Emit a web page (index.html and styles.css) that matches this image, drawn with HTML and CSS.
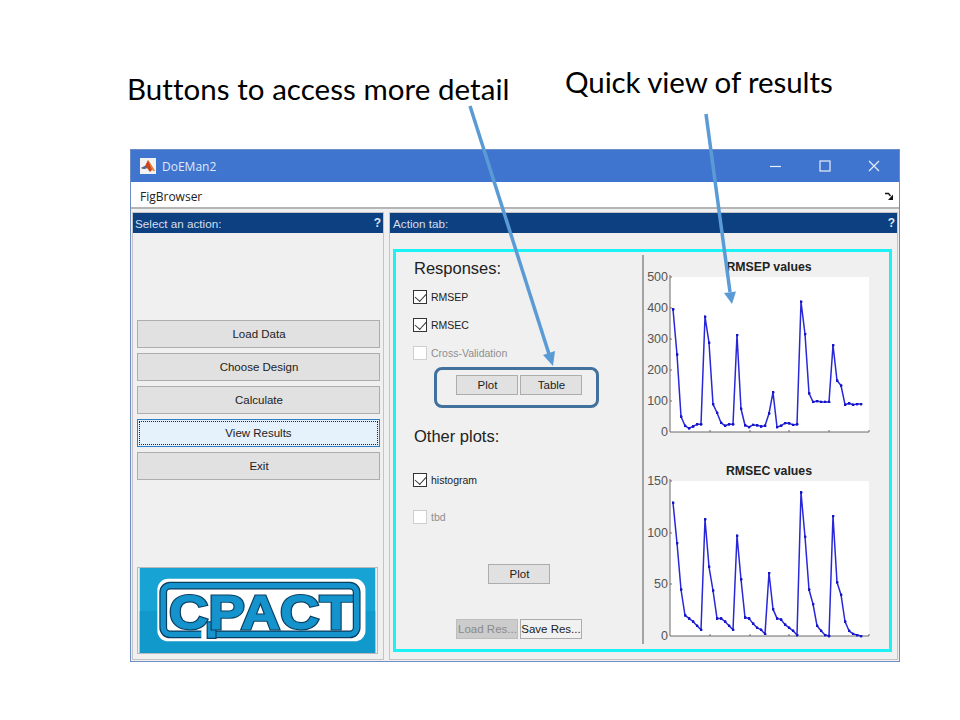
FILE: index.html
```html
<!DOCTYPE html>
<html lang="en">
<head>
<meta charset="utf-8">
<title>DoEMan2</title>
<link rel="stylesheet" href="styles.css">
</head>
<body>
<div class="slide">
  <div class="note note-detail">Buttons to access more detail</div>
  <div class="note note-quick">Quick view of results</div>

  <div class="window">
    <div class="titlebar">
      <svg class="app-icon" viewBox="0 0 16 16" aria-hidden="true">
        <rect width="16" height="16" fill="#f2f2f2"/>
        <path d="M1 10l4-2 3-6 2 3 5 8-3-1-2 2-3-4-3 1z" fill="#c9451d"/>
        <path d="M1 10l4-2 2 2-3 1z" fill="#3d6fa8"/>
        <path d="M8 2l2 3 5 8-3-1z" fill="#e9892b"/>
      </svg>
      <span class="app-name">DoEMan2</span>
      <div class="win-controls">
        <svg viewBox="0 0 12 12" aria-hidden="true"><path d="M0 6.500h11" /></svg>
        <svg viewBox="0 0 12 12" aria-hidden="true"><rect x="1" y="1" width="10" height="10"/></svg>
        <svg viewBox="0 0 12 12" aria-hidden="true"><path d="M1 1l10 10M11 1L1 11"/></svg>
      </div>
    </div>
    <div class="menubar">
      <span>FigBrowser</span>
      <svg class="dock-icon" viewBox="0 0 8 8" aria-hidden="true"><path d="M0 1.500h3.500l2 2.500" fill="none" stroke="#111" stroke-width="1.300"/><path d="M8 2.500V8H3z" fill="#111"/></svg>
    </div>

    <div class="panels">
      <section class="panel panel-left">
        <header class="panel-head"><span>Select an action:</span><b>?</b></header>
        <div class="actions">
          <button class="btn action">Load Data</button>
          <button class="btn action">Choose Design</button>
          <button class="btn action">Calculate</button>
          <button class="btn action selected"><span>View Results</span></button>
          <button class="btn action">Exit</button>
        </div>
        <svg class="logo" viewBox="0 0 241 87" aria-label="CPACT logo">
          <rect width="241" height="87" fill="#17a3d3"/>
          <rect x="0" y="44" width="241" height="43" fill="#1199cb"/>
          <rect x="18" y="11" width="213" height="64" rx="11" fill="#fff"/>
          <rect class="ring-dark" x="24" y="18" width="198" height="50" rx="7"/>
          <rect class="ring-blue" x="24" y="18" width="198" height="50" rx="7"/>
          <path class="stem-gap" d="M63 63h6v10h-6z"/>
          <path class="stem" d="M69 55h9v17h-9z"/>
          <text class="logo-under" aria-hidden="true" x="124" y="62" textLength="188" lengthAdjust="spacingAndGlyphs" text-anchor="middle">CPACT</text>
          <text class="logo-over" x="124" y="62" textLength="188" lengthAdjust="spacingAndGlyphs" text-anchor="middle">CPACT</text>
        </svg>
      </section>

      <section class="panel panel-right">
        <header class="panel-head"><span>Action tab:</span><b>?</b></header>
        <div class="frame">
          <div class="controls">
            <h2 class="group-title first">Responses:</h2>
            <label class="check first-check"><i class="box on"></i>RMSEP</label>
            <label class="check gap-28"><i class="box on"></i>RMSEC</label>
            <label class="check gap-28 disabled"><i class="box"></i>Cross-Validation</label>
            <div class="btn-row row-a"><button class="btn small">Plot</button><button class="btn small">Table</button></div>
            <h2 class="group-title second">Other plots:</h2>
            <label class="check hist-check"><i class="box on"></i>histogram</label>
            <label class="check tbd-check disabled"><i class="box"></i>tbd</label>
            <div class="btn-row row-b"><button class="btn small">Plot</button></div>
            <div class="btn-row row-c"><button class="btn small off">Load Res...</button><button class="btn small save">Save Res...</button></div>
          </div>
          <div class="charts">
            <svg class="chart chart-top" viewBox="0 0 232 180" aria-label="RMSEP values">
              <defs>
                <marker id="dot" viewBox="0 0 4 4" refX="2" refY="2" markerWidth="3" markerHeight="3" markerUnits="userSpaceOnUse"><circle cx="2" cy="2" r="2" fill="#1616c8"/></marker>
              </defs>
              <text class="chart-title" x="124" y="13" text-anchor="middle">RMSEP values</text>
              <rect x="25" y="19" width="199" height="155" fill="#fff"/>
              <g class="axis"><path d="M25 17V174H224M65 174v-2M105 174v-2M144 174v-2M184 174v-2M224 174v-2M25 143h2M25 112h2M25 81h2M25 50h2M25 19h2"/></g>
              <g class="ticks" text-anchor="end">
                <text x="23" y="178">0</text><text x="23" y="147">100</text><text x="23" y="116">200</text><text x="23" y="85">300</text><text x="23" y="54">400</text><text x="23" y="23">500</text>
              </g>
              <g transform="translate(25 19)">
                <polyline class="series" points="3,32.2 7,77.5 11,139.5 15,148.8 19,151.3 23,149.4 27,147.3 31,147.3 35,39.7 39,65.7 43,127.1 47,135.8 51,145.7 55,148.8 59,147.3 63,147.3 67,58 71,131.8 75,148.2 79,150 83,147.9 87,148.2 91,149.4 95,148.8 99,136.4 103,115.3 107,150 111,148.8 115,146 119,146.3 123,147.9 127,147.3 131,24.8 135,57 139,116.3 143,124.9 147,124 151,124.9 155,124.9 159,124.9 163,68.2 167,103.5 171,108.5 175,127.7 179,126.2 183,127.7 187,127.1 191,127.1"/>
              </g>
            </svg>
            <svg class="chart chart-bottom" viewBox="0 0 232 180" aria-label="RMSEC values">
              <text class="chart-title" x="124" y="13" text-anchor="middle">RMSEC values</text>
              <rect x="25" y="19" width="199" height="155" fill="#fff"/>
              <g class="axis"><path d="M25 17V174H224M65 174v-2M105 174v-2M144 174v-2M184 174v-2M224 174v-2M25 122h2M25 71h2M25 19h2"/></g>
              <g class="ticks" text-anchor="end">
                <text x="23" y="178">0</text><text x="23" y="126">50</text><text x="23" y="75">100</text><text x="23" y="23">150</text>
              </g>
              <g transform="translate(25 19)">
                <polyline class="series" points="3,21.7 7,62 11,108.5 15,134.3 19,137.4 23,140.5 27,144.7 31,148.8 35,38.2 39,85.8 43,109.5 47,137.4 51,137.4 55,140.5 59,144.7 63,148.8 67,54.8 71,98.2 75,136.4 79,137.4 83,142.6 87,146.7 91,148.8 95,152.9 99,92 103,128.1 107,137.4 111,138.5 115,143.6 119,146.7 123,149.8 127,154 131,11.4 135,55.8 139,108.5 143,123 147,144.7 151,149.8 155,154 159,155 163,35.1 167,101.3 171,113.7 175,140.5 179,149.8 183,152.9 187,154 191,155"/>
              </g>
            </svg>
          </div>
        </div>
      </section>
    </div>
  </div>

  <div class="callout"></div>
  <svg class="arrows" viewBox="0 0 960 720" aria-hidden="true">
    <path class="arrow-line" d="M470 106L549 354"/>
    <path class="arrow-head" d="M543 355l12 -4 L553 366z"/>
    <path class="arrow-line" d="M706 114L730 292"/>
    <path class="arrow-head" d="M724 293l12 -1.500 L732 304z"/>
  </svg>
</div>
</body>
</html>
```
FILE: styles.css
```css
* { box-sizing: border-box; }
html, body { margin: 0; padding: 0; background: #fff; }
body { font-family: "Liberation Sans", Arial, sans-serif; }

.slide { position: relative; width: 960px; height: 720px; overflow: hidden; background: #fff; }

.note { position: absolute; font-family: Lato, "Open Sans", sans-serif; color: #000; white-space: nowrap; line-height: 34px; font-size: 29.5px; }
.note-detail { left: 127px; top: 72px; letter-spacing: 0.05px; }
.note-quick { left: 565px; top: 65px; letter-spacing: -0.1px; }

.window { position: absolute; left: 130px; top: 149px; width: 770px; height: 513px; border: 1px solid #6d8cc4; background: #f0f0f0; display: flex; flex-direction: column; }

.titlebar { height: 32px; flex: none; background: #3f75cf; display: flex; align-items: center; padding-left: 9px; }
.app-icon { width: 16px; height: 16px; display: block; }
.app-name { margin-left: 6px; font-family: "Open Sans", sans-serif; font-size: 12px; color: #dfe8f7; }
.win-controls { margin-left: auto; display: flex; gap: 37px; margin-right: 19px; }
.win-controls svg { width: 12px; height: 12px; display: block; fill: none; stroke: #e8eef9; stroke-width: 1.2; }

.menubar { height: 27px; flex: none; background: #fff; border-bottom: 2px solid #b5b5b5; display: flex; align-items: center; justify-content: space-between; padding: 3px 6px 0 9px; font-family: "Open Sans", sans-serif; font-size: 12px; color: #222; }
.dock-icon { width: 8px; height: 8px; display: block; }

.panels { flex: 1; display: flex; gap: 5px; padding: 3px 1px 1px 1px; min-height: 0; }
.panel { border: 1px solid #c4c4c4; background: #f0f0f0; display: flex; flex-direction: column; }
.panel-left { width: 252px; }
.panel-right { flex: 1; min-width: 0; }

.panel-head { height: 20px; flex: none; background: #0d4080; color: #d7dfec; display: flex; align-items: center; justify-content: space-between; padding: 0 2px; font-size: 11.7px; }
.panel-right .panel-head { padding-left: 3px; }
.panel-head b { font-size: 12px; color: #dfe6f2; }

.actions { margin: 87px 0 0 4px; display: flex; flex-direction: column; gap: 5px; }
.btn { font-family: "Liberation Sans", Arial, sans-serif; color: #222; background: #e1e1e1; border: 1px solid #adadad; padding: 0 0 0 1px; margin: 0; display: block; white-space: nowrap; }
.action { width: 243px; height: 28px; font-size: 11.5px; }
.selected { background: #e5f1fb; border: 1px solid #2f7fc4; padding: 1px; }
.selected span { display: flex; align-items: center; justify-content: center; height: 100%; border: 1px dotted #222; }

.logo { display: block; width: 241px; height: 87px; margin: auto 0 5px 4px; border: 1px solid #b9b9b9; }
.ring-dark { fill: none; stroke: #0b3f60; stroke-width: 8; }
.ring-blue { fill: none; stroke: #1493cc; stroke-width: 5.5; }
.stem-gap { fill: #fff; }
.stem { fill: #1493cc; stroke: #0b3f60; stroke-width: 1.2; }
.logo-under, .logo-over { font-family: "Liberation Sans", Arial, sans-serif; font-weight: 700; font-size: 50px; }
.logo-under { fill: #0b3f60; stroke: #0b3f60; stroke-width: 3; stroke-linejoin: miter; }
.logo-over { fill: #1493cc; stroke: #1493cc; stroke-width: 0.8; }

.frame { margin: 16px 0 0 3px; width: 499px; height: 403px; border: 3px solid #1cf2f5; display: flex; }
.controls { width: 246px; flex: none; }
.group-title { margin: 0 0 0 18px; font-size: 16.5px; font-weight: 400; line-height: 20px; color: #222; }
.group-title.first { margin-top: 6px; }
.group-title.second { margin-top: 31px; }

.check { display: flex; align-items: center; height: 14px; margin-left: 17px; font-size: 10.5px; color: #222; }
.first-check { margin-top: 12px; }
.gap-28 { margin-top: 14px; }
.hist-check { margin-top: 27px; }
.tbd-check { margin-top: 23px; }
.check.disabled { color: #8e8e8e; }
.box { position: relative; width: 14px; height: 14px; flex: none; margin-right: 4px; border: 1px solid #333; background: #fff; }
.disabled .box { border-color: #cfcfcf; }
.box.on::after { content: ""; position: absolute; left: 3px; top: 0; width: 6px; height: 9px; border: solid #333; border-width: 0 1px 1px 0; transform: rotate(42deg); }

.btn-row { display: flex; gap: 2px; }
.row-a { margin: 15px 0 0 60px; }
.row-b { margin: 40px 0 0 92px; }
.row-c { margin: 35px 0 0 60px; }
.small { width: 62px; height: 20px; font-size: 11.5px; }
.off { background: #cccccc; border-color: #bdbdbd; color: #8a8a8a; }
.save { background: #f1f1f1; color: #222; padding: 0; }

.charts { flex: 1; min-width: 0; margin: 3px 0 5px; border-left: 2px solid #a3a3a3; padding-left: 1px; display: flex; flex-direction: column; }
.chart { display: block; width: 232px; height: 180px; flex: none; }
.chart-top { margin-top: 3px; }
.chart-bottom { margin-top: 24px; }
.chart-title { font-family: "Liberation Sans", Arial, sans-serif; font-size: 12.3px; font-weight: 700; fill: #222; }
.ticks text { font-family: "Liberation Sans", Arial, sans-serif; font-size: 12.5px; fill: #555; }
.axis path { fill: none; stroke: #6a6a6a; stroke-width: 1; }
.series { fill: none; stroke: #2828d8; stroke-width: 1.5; stroke-linejoin: round; marker: url(#dot); }

.callout { position: absolute; left: 434px; top: 367px; width: 165px; height: 41px; border: 3px solid #41719c; border-radius: 8px; }
.arrows { position: absolute; left: 0; top: 0; width: 960px; height: 720px; pointer-events: none; }
.arrow-line { fill: none; stroke: #5b9bd5; stroke-width: 3.5; }
.arrow-head { fill: #5b9bd5; }
```
